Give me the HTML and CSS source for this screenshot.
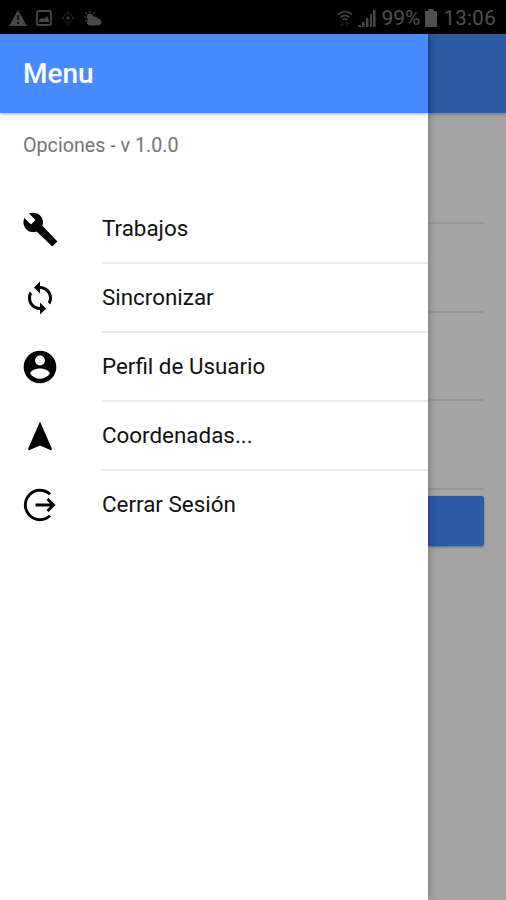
FILE: index.html
```html
<!DOCTYPE html>
<html lang="es">
<head>
    <meta charset="UTF-8">
    <meta name="viewport" content="width=device-width, initial-scale=1.0">
    <title>Menu</title>
    <link rel="stylesheet" href="styles.css">
</head>
<body>
    <div class="status-bar">
        <div class="status-left">
            <svg width="18" height="16" viewBox="0 0 18 16"><path d="M9 0L18 16H0z" fill="#484848"/><path d="M9 5v5M9 12v2" stroke="#111" stroke-width="2"/></svg>
            <svg width="16" height="16" viewBox="0 0 16 16"><rect x="1" y="1" width="14" height="14" rx="1.5" fill="none" stroke="#484848" stroke-width="1.8"/><path d="M3 12V10l3-2 2 1 3-3 2 4v2z" fill="#484848"/></svg>
            <svg width="14" height="14" viewBox="0 0 14 14" fill="none" stroke="#262626"><circle cx="7" cy="7" r="4.5"/><circle cx="7" cy="7" r="1.5" fill="#484848"/><path d="M7 0v3M7 11v3M0 7h3M11 7h3"/></svg>
            <svg width="19" height="15" viewBox="0 0 19 15"><circle cx="6" cy="6" r="3.2" fill="#484848"/><path d="M6 0v2M0 6h2M1.5 1.5L3 3M10.500 1.500L9 3M1.500 10.500L3 9" stroke="#484848" stroke-width="1.2"/><path d="M6 14.500a3 3 0 0 1 0-6 4.500 4.500 0 0 1 8-1 3.600 3.600 0 0 1 1 7z" fill="#484848"/></svg>
        </div>
        <div class="status-right">
            <svg class="wifi" width="16" height="17" viewBox="0 0 16 17" fill="none" stroke="#484848" stroke-width="1.6"><path d="M1 4.500Q8-1.500 15 4.500M3.500 7.500Q8 3.500 12.500 7.500M5.500 10Q8 8 10.500 10"/><path d="M5 12v4M3 14l2 2 2-2M10 16v-4M8 14l2-2 2 2" stroke="#222" stroke-width="1"/></svg>
            <svg class="signal" width="18" height="17" viewBox="0 0 18 17" fill="#484848"><path d="M0 15h3v2H0zM4 12h2.500v5H4zM8 8h2.500v9H8zM12 4h2v13h-2zM15 0h2.500v17H15z"/></svg>
            <span class="percent">99%</span>
            <svg class="battery" width="12" height="18" viewBox="0 0 12 18"><path d="M3.500 0h5v2H12v16H0V2h3.500z" fill="#505050"/></svg>
            <span class="clock">13:06</span>
        </div>
    </div>

    <div class="screen">
        <div class="menu">
            <div class="menu-header">Menu</div>
            <div class="menu-caption">Opciones - v 1.0.0</div>
            <ul class="menu-list">
                <li class="menu-item">
                    <svg class="icon" viewBox="0 0 24 24"><path d="M23.600 20.300L13.600 9.900c.9-2.300.4-5-1.500-6.900-2-2-5-2.400-7.400-1.300L9 6 6 9 1.600 4.700C.4 7.100.9 10.100 2.900 12.100c1.900 1.900 4.600 2.400 6.900 1.500l10.400 10z"/></svg>
                    <span class="label">Trabajos</span>
                </li>
                <li class="menu-item">
                    <svg class="icon" viewBox="0 0 24 24"><path d="M12 4V1L8 5l4 4V6c3.310 0 6 2.690 6 6 0 1.010-.25 1.970-.7 2.800l1.460 1.460C19.540 15.030 20 13.570 20 12c0-4.420-3.580-8-8-8zm0 14c-3.310 0-6-2.690-6-6 0-1.010.25-1.970.7-2.800L5.240 7.740C4.460 8.970 4 10.430 4 12c0 4.420 3.580 8 8 8v3l4-4-4-4v3z"/></svg>
                    <span class="label">Sincronizar</span>
                </li>
                <li class="menu-item">
                    <svg class="icon" viewBox="1 1 22 22"><path d="M12 2C6.480 2 2 6.480 2 12s4.480 10 10 10 10-4.480 10-10S17.520 2 12 2zm0 3c1.660 0 3 1.340 3 3s-1.340 3-3 3-3-1.340-3-3 1.340-3 3-3zm0 14.200c-2.500 0-4.710-1.280-6-3.220.03-1.990 4-3.080 6-3.080s5.970 1.090 6 3.080c-1.290 1.940-3.500 3.220-6 3.220z"/></svg>
                    <span class="label">Perfil de Usuario</span>
                </li>
                <li class="menu-item">
                    <svg class="icon" viewBox="0 0 36 36"><path d="M18 3.500L6 31l1.200 1.200L18 27.500l10.800 4.700L30 31z"/></svg>
                    <span class="label">Coordenadas...</span>
                </li>
                <li class="menu-item">
                    <svg class="icon" viewBox="0 0 36 36" fill="none" stroke="#000" stroke-width="2.900"><path d="M28 7.200A14.700 14.700 0 1 0 28 28.800M13.500 18H32M25.500 12l6 6-6 6"/></svg>
                    <span class="label">Cerrar Sesión</span>
                </li>
            </ul>
        </div>
        <div class="page">
            <div class="page-header"></div>
            <div class="page-form">
                <div class="field first"></div>
                <div class="field"></div>
                <div class="field"></div>
                <div class="field"></div>
                <div class="submit"></div>
            </div>
        </div>
    </div>
</body>
</html>
```
FILE: styles.css
```css
* {
    box-sizing: border-box;
}
body {
    margin: 0;
    height: 900px;
    overflow: hidden;
    display: flex;
    flex-direction: column;
    font-family: Roboto, "Liberation Sans", sans-serif;
    background: #fff;
}
.status-bar {
    height: 34px;
    flex: none;
    padding: 2px 10px 0 9px;
    display: flex;
    justify-content: space-between;
    align-items: center;
    background: #000;
    color: #505050;
}
.status-left,
.status-right {
    display: flex;
    align-items: center;
}
.status-left {
    gap: 9px;
}
.signal {
    margin-left: 5px;
}
.percent {
    margin-left: 5px;
    font-size: 21px;
}
.battery {
    margin-left: 5px;
}
.clock {
    margin-left: 6px;
    font-size: 20.500px;
    letter-spacing: 0.3px;
}
.screen {
    flex: 1;
    display: flex;
}
.menu {
    width: 428px;
    flex: none;
    position: relative;
    background: #fff;
    box-shadow: 0 0 11px rgba(0,0,0,0.3);
}
.menu-header {
    height: 79px;
    padding-left: 23px;
    line-height: 80px;
    font-size: 28px;
    font-weight: 500;
    color: #fff;
    background: #488aff;
    box-shadow: 0 1px 4px rgba(0,0,0,0.35);
}
.menu-caption {
    height: 82px;
    padding: 21px 0 0 23px;
    font-size: 19.700px;
    line-height: 24px;
    color: #757575;
}
.menu-list {
    list-style: none;
    margin: 0;
    padding: 0;
}
.menu-item {
    height: 69px;
    padding-left: 22px;
    display: flex;
    align-items: center;
}
.icon {
    width: 36px;
    height: 36px;
    flex: none;
    margin-bottom: 1px;
}
.label {
    flex: 1;
    height: 69px;
    margin-left: 44px;
    line-height: 66px;
    font-size: 22.400px;
    color: #111;
    border-bottom: 2px solid #e8e8e8;
}
.menu-item:last-child .label {
    line-height: 67px;
    border-bottom: none;
}
.page {
    flex: 1;
    background: #a5a5a5;
}
.page-header {
    height: 79px;
    background: #2f5aa6;
    box-shadow: 0 1px 4px rgba(0,0,0,0.3);
}
.page-form {
    padding-right: 22px;
}
.field {
    height: 88.700px;
    border-bottom: 2px solid #979797;
}
.field.first {
    height: 111px;
}
.submit {
    height: 50px;
    margin-top: 6px;
    border-radius: 0 3px 3px 0;
    background: #2f5aa6;
    box-shadow: 0 1px 3px rgba(0,0,0,0.4);
}
```
